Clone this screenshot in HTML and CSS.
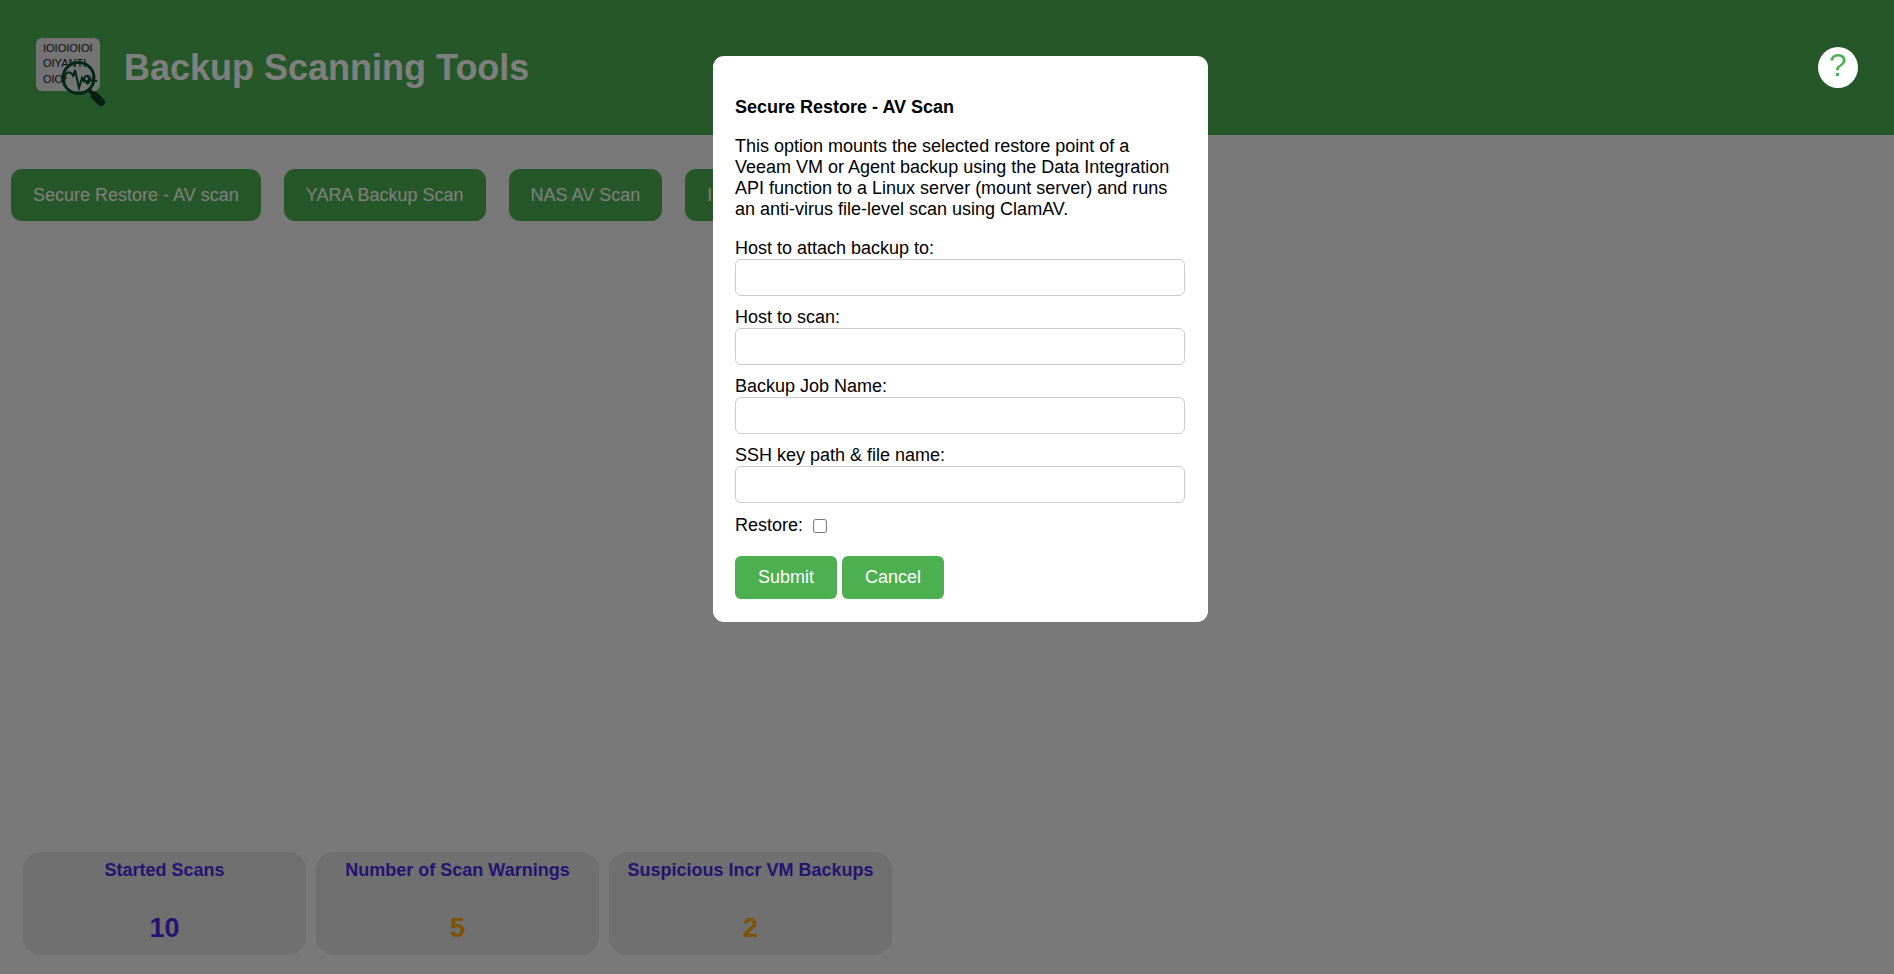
FILE: index.html
```html
<!DOCTYPE html>
<html lang="en">
<head>
<meta charset="utf-8">
<title>Backup Scanning Tools</title>
<link rel="stylesheet" href="styles.css">
</head>
<body>
<header class="header">
  <svg class="logo" viewBox="0 0 72 72" aria-hidden="true">
    <rect x="0" y="1" width="64" height="53" rx="6" fill="#e8e8e8"/>
    <g class="logo-text">
      <text x="7" y="15">IOIOIOIOI</text>
      <text x="7" y="30">OIYANTI</text>
      <text x="7" y="46">OIOI</text>
      <text x="47" y="46">OI</text>
    </g>
    <circle cx="42.500" cy="41" r="15.500" fill="none" stroke="#005030" stroke-width="3"/>
    <path d="M30 42a4 4 0 1 1 7-2l2-7 4 18 3-10 2 4c0-7 4-8 5-3s-3 6-3 2l5-1 2 1h4" fill="none" stroke="#005030" stroke-width="2"/>
    <path d="M53 53l6 6" stroke="#003c24" stroke-width="4"/>
    <path d="M59 59l6 6" stroke="#003c24" stroke-width="8" stroke-linecap="round"/>
  </svg>
  <h1 class="title">Backup Scanning Tools</h1>
  <button class="help" type="button" aria-label="Help">?</button>
</header>
<main class="main">
  <nav class="actions">
    <button class="action" type="button">Secure Restore - AV scan</button>
    <button class="action" type="button">YARA Backup Scan</button>
    <button class="action" type="button">NAS AV Scan</button>
    <button class="action" type="button">I</button>
  </nav>
  <section class="stats">
    <article class="stat"><h2 class="stat-name">Started Scans</h2><p class="stat-value">10</p></article>
    <article class="stat"><h2 class="stat-name">Number of Scan Warnings</h2><p class="stat-value warn">5</p></article>
    <article class="stat"><h2 class="stat-name">Suspicious Incr VM Backups</h2><p class="stat-value warn">2</p></article>
  </section>
</main>
<div class="overlay">
  <form class="modal" role="dialog" aria-labelledby="modal-title">
    <h2 class="modal-title" id="modal-title">Secure Restore - AV Scan</h2>
    <p class="modal-text">This option mounts the selected restore point of a Veeam VM or Agent backup using the Data Integration API function to a Linux server (mount server) and runs an anti-virus file-level scan using ClamAV.</p>
    <div class="field"><label for="mount">Host to attach backup to:</label><input class="input" id="mount" type="text"></div>
    <div class="field"><label for="host">Host to scan:</label><input class="input" id="host" type="text"></div>
    <div class="field"><label for="job">Backup Job Name:</label><input class="input" id="job" type="text"></div>
    <div class="field"><label for="key">SSH key path &amp; file name:</label><input class="input" id="key" type="text"></div>
    <div class="check"><label for="restore">Restore:</label><input class="checkbox" id="restore" type="checkbox"></div>
    <div class="buttons">
      <button class="button" type="submit">Submit</button>
      <button class="button" type="button">Cancel</button>
    </div>
  </form>
</div>
</body>
</html>
```
FILE: styles.css
```css
* {
  box-sizing: border-box;
}

body {
  display: flex;
  flex-direction: column;
  min-height: 100vh;
  margin: 0;
  background: #f2f2f2;
  font: 18px/21px "Liberation Sans", Arial, sans-serif;
  color: #000;
}

button,
input {
  font: inherit;
}

.header {
  display: flex;
  align-items: center;
  height: 135px;
  padding: 0 36px;
  background: #4caf50;
}

.logo {
  width: 72px;
  height: 72px;
  flex: none;
  margin-top: 10px;
}

.logo-text {
  font: 11px "Liberation Sans", Arial, sans-serif;
  fill: #222;
}

.title {
  margin: 0 auto 0 16px;
  font-size: 36px;
  line-height: 42px;
  color: #fff;
}

.help {
  position: relative;
  z-index: 2;
  width: 40px;
  height: 41px;
  padding: 0 0 5px;
  border: 0;
  border-radius: 50%;
  background: #fff;
  color: #4caf50;
  font-size: 32px;
  line-height: 36px;
}

.main {
  display: flex;
  flex: 1;
  flex-direction: column;
  justify-content: space-between;
  padding: 34px 11px 19px;
}

.actions {
  display: flex;
  gap: 23px;
}

.action {
  height: 52px;
  padding: 0 22px;
  border: 0;
  border-radius: 11px;
  background: #4caf50;
  color: #fff;
}

.stats {
  display: flex;
  gap: 10px;
  padding-left: 12px;
}

.stat {
  width: 283px;
  padding: 8px 0 11px;
  border-radius: 18px;
  background: #e0e0e3;
  text-align: center;
}

.stat-name {
  margin: 0 0 32px;
  font-size: 18px;
  line-height: 21px;
  color: #4a2ae0;
}

.stat-value {
  margin: 0;
  font-size: 27px;
  font-weight: bold;
  line-height: 31px;
  color: #4a2ae0;
}

.warn {
  color: #ffa500;
}

.overlay {
  position: fixed;
  inset: 0;
  z-index: 1;
  display: flex;
  align-items: flex-start;
  justify-content: center;
  padding: 56px 0 0 27px;
  background: rgba(0, 0, 0, 0.5);
}

.modal {
  width: 495px;
  padding: 23px 23px 23px 22px;
  border-radius: 11px;
  background: #fff;
}

.modal-title {
  margin: 18px 0;
  font-size: 18px;
  line-height: 21px;
}

.modal-text {
  margin: 0 0 18px;
}

.field {
  display: flex;
  flex-direction: column;
  margin-bottom: 11px;
}

.input {
  width: 100%;
  height: 37px;
  padding: 0 9px;
  border: 1px solid #ccc;
  border-radius: 6px;
  background: #fff;
}

.check {
  display: flex;
  align-items: center;
  gap: 10px;
  height: 23px;
  margin-bottom: 19px;
}

.checkbox {
  width: 14px;
  height: 14px;
  margin: 0;
}

.buttons {
  display: flex;
  gap: 5px;
}

.button {
  height: 43px;
  padding: 0 23px;
  border: 0;
  border-radius: 6px;
  background: #4caf50;
  color: #fff;
}
```
